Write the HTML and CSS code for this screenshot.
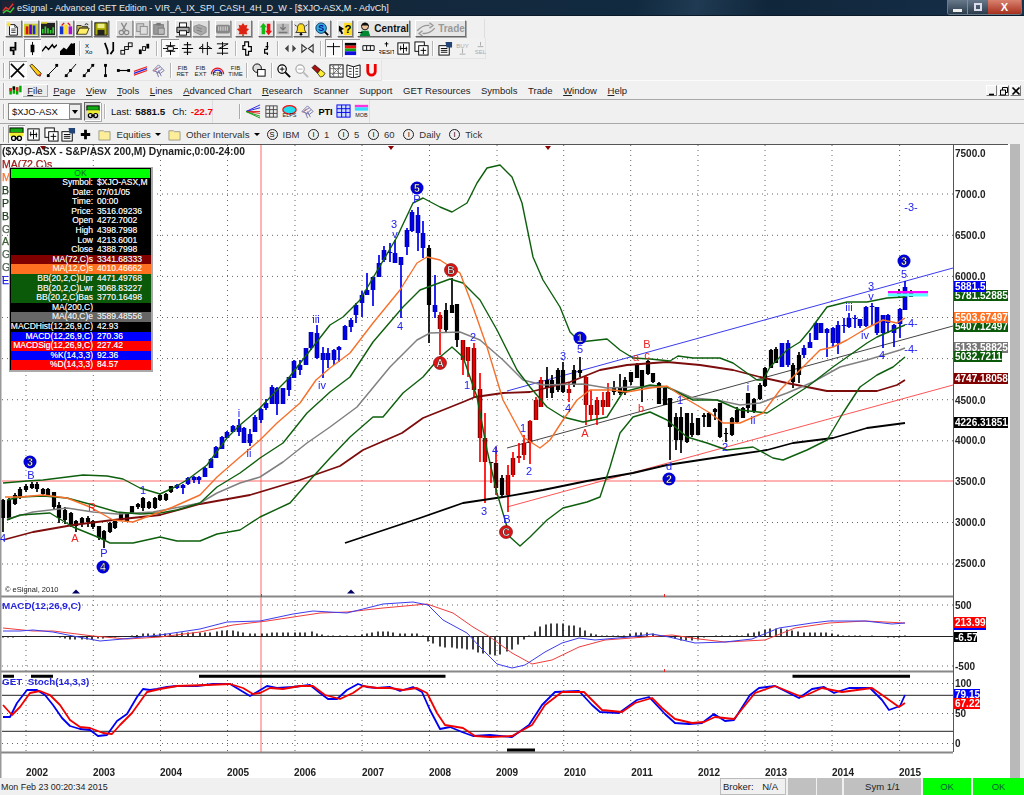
FILE: index.html
```html
<!DOCTYPE html>
<html lang="en">
<head>
<meta charset="utf-8">
<title>eSignal - Advanced GET Edition</title>
<link rel="stylesheet" href="styles.css">
</head>
<body>
<div class="app">

<header class="titlebar">
  <svg class="ticon" viewBox="0 0 14 14"><rect width="14" height="14" fill="#223"/><path d="M1 11 4 7 7 9 12 3" fill="none" stroke="#e33" stroke-width="1.5"/><path d="M1 13 5 10 9 12 13 7" fill="none" stroke="#3c3" stroke-width="1.5"/></svg>
  <span class="ttext">eSignal - Advanced GET Edition - VIR_A_IX_SPI_CASH_4H_D_W - [$XJO-ASX,M - AdvCh]</span>
  <div class="winbtns">
    <span class="wb wb-min"><i></i></span>
    <span class="wb wb-max"><i></i></span>
    <span class="wb wb-close">X</span>
  </div>
</header>

<div class="band band-top">
  <!-- toolbar 1 -->
  <div class="tbar tbar1">
    <div class="b"><svg viewBox="0 0 16 16"><path d="M4 3h6l3 3v9H4z" fill="#fff" stroke="#000"/><path d="M10 3v3h3M6 8h5M6 10h5M6 12h5" fill="none" stroke="#000" stroke-width=".8"/><path d="M3 0l1 2 2 0-1.500 1.500 .5 2-2-1-2 1 .5-2L0 2l2 0z" fill="#fd3"/></svg></div>
    <div class="b"><svg viewBox="0 0 16 16"><rect x="0" y="2" width="16" height="13" fill="#cc3"/><rect x="2" y="5" width="3" height="9" fill="#d11"/><rect x="6" y="3" width="3" height="11" fill="#60c"/><rect x="10" y="4" width="3" height="10" fill="#13c"/></svg></div>
    <div class="b"><svg viewBox="0 0 16 16"><rect x="0" y="1" width="16" height="14" fill="#222"/><path d="M2 13V8M5 13V5M8 13V7M11 13V9M14 13V6" stroke="#3c3" stroke-width="2"/><path d="M0 1h7" stroke="#dc3" stroke-width="2"/></svg></div>
    <div class="b"><svg viewBox="0 0 16 16"><rect x="1" y="5" width="4" height="9" fill="#13c"/><rect x="6" y="3" width="4" height="11" fill="#fd2"/><rect x="11" y="5" width="4" height="9" fill="#a1c"/><path d="M3 4l3-3M13 4l-3-3" stroke="#d11" stroke-width="1.500"/></svg></div>
    <div class="b"><svg viewBox="0 0 16 16"><path d="M1 4h5l1 1h6v2H4L1 14z" fill="#cb5" stroke="#000" stroke-width=".8"/><path d="M4 7h11l-3 7H1z" fill="#fe6" stroke="#000" stroke-width=".8"/><path d="M10 3q2-2 4 0" fill="none" stroke="#000"/></svg></div>
    <div class="b"><svg viewBox="0 0 16 16"><rect x="1" y="1" width="14" height="14" fill="#aa0" stroke="#000"/><rect x="4" y="2" width="8" height="5" fill="#ee8"/><rect x="4" y="9" width="8" height="6" fill="#222"/></svg></div>
    <i class="gap g5"></i>
    <div class="b dis"><svg viewBox="0 0 16 16"><path d="M5 1l5 9M11 1l-5 9" fill="none" stroke="#888" stroke-width="1.500"/><circle cx="5" cy="12" r="2.500" fill="none" stroke="#888" stroke-width="1.300"/><circle cx="11" cy="12" r="2.500" fill="none" stroke="#888" stroke-width="1.300"/></svg></div>
    <div class="b dis"><svg viewBox="0 0 16 16"><rect x="2" y="2" width="8" height="9" fill="#ccc" stroke="#888"/><rect x="6" y="5" width="8" height="9" fill="#ddd" stroke="#888"/></svg></div>
    <div class="b dis"><svg viewBox="0 0 16 16"><rect x="2" y="3" width="11" height="11" fill="#999" stroke="#777"/><rect x="5" y="1" width="5" height="3" fill="#777"/><rect x="7" y="7" width="7" height="7" fill="#bbb" stroke="#777"/></svg></div>
    <i class="gap g5"></i>
    <div class="b"><svg viewBox="0 0 16 16"><rect x="4" y="1" width="8" height="5" fill="#fff" stroke="#000"/><path d="M1 6h14v6H1z" fill="#aaa" stroke="#000"/><rect x="4" y="10" width="8" height="5" fill="#fff" stroke="#000"/></svg></div>
    <div class="b dis"><svg viewBox="0 0 16 16"><path d="M1 5l6-2 8 3v6l-6 3-8-4z" fill="#aaa" stroke="#888"/><path d="M4 6l6 2M4 9l6 2" stroke="#777"/></svg></div>
    <i class="gap g4"></i>
    <div class="b dis"><svg viewBox="0 0 16 16"><rect x="0" y="3" width="16" height="10" rx="2" fill="#888"/><path d="M3 5v5M5 5v5M7 5v5M9 5v5M11 5v5M13 5v5" stroke="#ddd" stroke-width=".9"/></svg></div>
    <i class="gap g2"></i>
    <div class="b"><svg viewBox="0 0 16 16"><path d="M8 1l2 3 3-1-1 4 3 1-3 3 1 3H3l1-3-3-3 3-1-1-4 3 1z" fill="#d21"/><path d="M7 14h2v2H7z" fill="#952"/></svg></div>
    <i class="gap g4"></i>
    <div class="b"><svg viewBox="0 0 16 16"><path d="M5 1l4 5H7v8H3V6H1z" fill="#1b1"/><path d="M11 15l-4-5h2V2h4v8h2z" fill="#e11"/></svg></div>
    <div class="b dis"><svg viewBox="0 0 16 16"><rect x="1" y="2" width="14" height="12" fill="#bbb"/><path d="M8 2v7M5 6l3 3 3-3M3 12h10" fill="none" stroke="#777" stroke-width="1.500"/></svg></div>
    <div class="b"><svg viewBox="0 0 16 16"><path d="M8 2c3 0 4 2 4 5s1 4 2 5H2c1-1 2-2 2-5s1-5 4-5z" fill="#fd2" stroke="#000" stroke-width=".8"/><circle cx="8" cy="14" r="1.500" fill="#000"/><path d="M1 3l2 2M15 3l-2 2" stroke="#000"/></svg></div>
    <i class="gap g3"></i>
    <div class="b"><svg viewBox="0 0 16 16"><circle cx="7" cy="7" r="6" fill="#3ad" stroke="#036"/><path d="M11 11l4 4" stroke="#000" stroke-width="2"/><text x="7" y="10.500" class="svb" text-anchor="middle" fill="#019">S</text></svg></div>
    <i class="gap g4"></i>
    <div class="b"><svg viewBox="0 0 16 16"><path d="M1 4l6 4-3 1 2 4-2 1-2-4-1 2z" fill="#000"/><rect x="7" y="1" width="9" height="14" fill="#fd2"/><text x="11.500" y="12" class="svb svb-l" text-anchor="middle">?</text></svg></div>
    <i class="gap g2"></i>
    <div class="b b-central"><svg viewBox="0 0 16 16"><circle cx="8" cy="5" r="4" fill="#e9c29b" stroke="#000"/><path d="M4 4q4-5 8 0" fill="#111" stroke="#000"/><path d="M2 16l2-6h8l2 6z" fill="#083"/><path d="M0 12h5" stroke="#000"/></svg><span>Central</span></div>
    <i class="gap g3"></i>
    <div class="b b-trade"><svg viewBox="0 0 22 16"><path d="M1 10q6-7 14-6M15 1l4 3-4 3M21 7q-6 7-14 6M7 16l-4-3 4-3" fill="none" stroke="#999" stroke-width="1.500"/></svg><span>Trade</span></div>
  </div>

  <!-- toolbar 2 -->
  <div class="tbar tbar2">
    <i class="grip"></i>
    <div class="f"><svg viewBox="0 0 16 16"><path d="M9 1v6H4v3h3v5M9 7v3" fill="none" stroke="#000" stroke-width="2"/></svg></div>
    <div class="f on"><svg viewBox="0 0 16 16"><rect x="6" y="4" width="4" height="8" fill="#000"/><path d="M8 1v14" stroke="#000"/></svg></div>
    <div class="f"><svg viewBox="0 0 16 16"><path d="M0 11l4-5 3 3 4-5 2 3 3-3" fill="none" stroke="#000" stroke-width="1.500"/></svg></div>
    <div class="f"><svg viewBox="0 0 16 16"><path d="M0 15V11l4-4 3 2 5-7 1 1 3-1v13z" fill="#000"/></svg></div>
    <i class="sep"></i>
    <div class="f"><svg viewBox="0 0 16 16"><text x="1" y="7" class="svs">X</text><text x="1" y="14" class="svs">Xo</text></svg></div>
    <div class="f"><svg viewBox="0 0 16 16"><path d="M3 2l3 8v4M12 1v9l-3 4" fill="none" stroke="#000" stroke-width="1.800"/></svg></div>
    <div class="f"><svg viewBox="0 0 16 16"><rect x="2" y="10" width="4" height="4" fill="none" stroke="#000"/><rect x="6" y="6" width="4" height="3" fill="none" stroke="#000"/><rect x="10" y="2" width="4" height="4" fill="none" stroke="#000"/></svg></div>
    <div class="f"><svg viewBox="0 0 16 16"><rect x="2" y="9" width="3" height="5" fill="#000"/><rect x="6" y="6" width="3" height="4" fill="none" stroke="#000"/><rect x="10" y="3" width="3" height="5" fill="#000"/></svg></div>
    <i class="sep sepw"></i>
    <div class="f on"><svg viewBox="0 0 16 16"><path d="M8 1v14M0 8h16M3 5h10M3 11h10" fill="none" stroke="#000"/><path d="M5 6h6v4H5z" fill="#fff" stroke="#000"/></svg></div>
    <div class="f"><svg viewBox="0 0 16 16"><path d="M8 1v14M4 4h8M2 8h12M4 12h8" stroke="#000" stroke-width="1.200"/></svg></div>
    <div class="f"><svg viewBox="0 0 16 16"><path d="M5 3v10M10 1v14M1 8l4-3M14 8l-4-3M1 8h14" fill="none" stroke="#000"/></svg></div>
    <div class="f"><svg viewBox="0 0 16 16"><path d="M8 1v14M2 3h12L4 8h10M2 13h12" fill="none" stroke="#000"/></svg></div>
    <i class="sep sepw"></i>
    <div class="f"><svg viewBox="0 0 16 16"><path d="M4 1h4v5h3v5H8v4H5v-6H2V5h2z" fill="#fff" stroke="#000" stroke-width="1.300"/></svg></div>
    <div class="f"><svg viewBox="0 0 16 16"><path d="M9 1v8M7 6h3M9 9H6v4h3v2" fill="none" stroke="#000" stroke-width="1.300"/></svg></div>
    <i class="sep"></i>
    <div class="f"><svg viewBox="0 0 16 16"><path d="M6 4v8L2 8zM10 4v8l4-4z" fill="#444"/></svg></div>
    <div class="f"><svg viewBox="0 0 16 16"><path d="M2 4v8l5-4zM14 4v8l-5-4z" fill="none" stroke="#333" stroke-width="1.200"/></svg></div>
    <i class="sep sepw"></i>
    <div class="f on"><svg viewBox="0 0 16 16"><path d="M8 2v13M1 6h14" stroke="#000" fill="none"/></svg></div>
    <div class="f on"><svg viewBox="0 0 16 16"><rect x="2" y="2" width="12" height="3" fill="#000"/><rect x="2" y="5" width="12" height="3" fill="#e11"/><rect x="2" y="8" width="12" height="3" fill="#1a1"/><rect x="2" y="11" width="12" height="4" fill="#11d"/></svg></div>
    <div class="f"><svg viewBox="0 0 16 16"><path d="M2 5h12v5H2zM6 5v5M10 5v5" fill="#fff" stroke="#000"/></svg></div>
    <div class="f"><svg viewBox="0 0 16 16"><path d="M8 1v5M6 3h4" stroke="#000"/><text x="8" y="14" class="svs" text-anchor="middle">RESIT</text></svg></div>
    <div class="f"><svg viewBox="0 0 16 16"><rect x="2" y="2" width="12" height="12" fill="#fff" stroke="#000"/><path d="M8 3v10M5 5v5M11 6v5M4 8h8" stroke="#000"/></svg></div>
    <div class="f"><svg viewBox="0 0 16 16"><rect x="1" y="1" width="10" height="10" fill="#fff" stroke="#000"/><rect x="5" y="5" width="10" height="10" fill="#fff" stroke="#000"/><path d="M10 7v7M7 10h6" stroke="#000"/></svg></div>
    <i class="sep"></i>
    <div class="f"><svg viewBox="0 0 16 16"><rect x="1" y="5" width="11" height="10" fill="#fff" stroke="#000"/><path d="M3 8h7M3 10h7M3 12h7" stroke="#000"/><path d="M8 1h7v6H9z" fill="#247"/></svg></div>
    <div class="f"><svg viewBox="0 0 16 16"><text x="8" y="7" class="svs" text-anchor="middle" fill="#aaa">BUY</text><path d="M8 8v5M5 14h6" stroke="#aaa"/></svg></div>
    <div class="f"><svg viewBox="0 0 16 16"><path d="M8 1v4M5 6h6" stroke="#aaa"/><text x="8" y="14" class="svs" text-anchor="middle" fill="#aaa">SEL</text></svg></div>
  </div>

  <!-- toolbar 3 -->
  <div class="tbar tbar3">
    <i class="grip"></i>
    <div class="f on"><svg viewBox="0 0 16 16"><path d="M1 1l14 14M15 1L1 15" stroke="#000" stroke-width="1.700"/></svg></div>
    <div class="f"><svg viewBox="0 0 16 16"><path d="M2 3l2-2 10 10-1 3-3-1z" fill="#fc1" stroke="#000" stroke-width=".8"/><path d="M10 13l3 1 1-3z" fill="#c33"/></svg></div>
    <div class="f"><svg viewBox="0 0 16 16"><path d="M3 13L13 3" stroke="#000"/><rect x="2" y="12" width="3" height="3" fill="#000"/><rect x="11" y="1" width="3" height="3" fill="#000"/></svg></div>
    <div class="f"><svg viewBox="0 0 16 16"><path d="M2 15L14 1" stroke="#000"/><rect x="6.500" y="6.500" width="3" height="3" fill="#000"/><rect x="2" y="12" width="3" height="3" fill="#000"/></svg></div>
    <div class="f"><svg viewBox="0 0 16 16"><path d="M2 15L14 1" stroke="#000"/><rect x="2" y="12" width="3" height="3" fill="#000"/><rect x="6.500" y="6.500" width="3" height="3" fill="#000"/><rect x="11" y="1" width="3" height="3" fill="#000"/></svg></div>
    <div class="f"><svg viewBox="0 0 16 16"><path d="M8 2v12" stroke="#000" stroke-width="1.200"/><rect x="6.500" y="1" width="3" height="3" fill="#000"/><rect x="6.500" y="12" width="3" height="3" fill="#000"/></svg></div>
    <div class="f"><svg viewBox="0 0 16 16"><path d="M2 8h12" stroke="#000" stroke-width="1.200"/><rect x="1" y="6.500" width="3" height="3" fill="#000"/><rect x="12" y="6.500" width="3" height="3" fill="#000"/></svg></div>
    <div class="f"><svg viewBox="0 0 16 16"><path d="M1 9l14-5" stroke="#e22" stroke-width="1.300"/><path d="M1 11l14-5" stroke="#22d" stroke-width="1.300"/><path d="M1 13l14-5" stroke="#e22" stroke-width="1.300"/></svg></div>
    <div class="f"><svg viewBox="0 0 16 16"><path d="M2 8l6-6 6 6-4 3zM4 8l6-4M6 11l6-5M8 15l-2-6M11 14l-3-6" fill="none" stroke="#77a"/><path d="M3 9l4-4" stroke="#c66"/></svg></div>
    <i class="sep"></i>
    <div class="f"><svg viewBox="0 0 16 16"><text x="8" y="7" class="svf" text-anchor="middle">FIB</text><text x="8" y="14" class="svf" text-anchor="middle">RET</text></svg></div>
    <div class="f"><svg viewBox="0 0 16 16"><text x="8" y="7" class="svf" text-anchor="middle">FIB</text><text x="8" y="14" class="svf" text-anchor="middle">EXT</text></svg></div>
    <div class="f"><svg viewBox="0 0 16 16"><path d="M1.500 12A6.500 6.500 0 0 1 14.500 12" fill="none" stroke="#e11" stroke-width="1.300"/><path d="M3.500 12A4.500 4.500 0 0 1 12.500 12" fill="none" stroke="#22d" stroke-width="1.300"/><text x="8" y="14" class="svf" text-anchor="middle">FIB</text></svg></div>
    <div class="f"><svg viewBox="0 0 16 16"><text x="8" y="7" class="svf" text-anchor="middle">FIB</text><text x="8" y="14" class="svf" text-anchor="middle">TIME</text></svg></div>
    <i class="sep"></i>
    <div class="f"><svg viewBox="0 0 16 16"><circle cx="5.500" cy="5.500" r="4.500" fill="#ddd" stroke="#000"/><rect x="6" y="7" width="8" height="7" fill="#fff" stroke="#000"/></svg></div>
    <i class="sep"></i>
    <div class="f"><svg viewBox="0 0 16 16"><circle cx="6.500" cy="6.500" r="4.500" fill="#fff" stroke="#000" stroke-width="1.300"/><path d="M10 10l5 5" stroke="#000" stroke-width="2"/><path d="M4 6.500h5M6.500 4v5" stroke="#000"/></svg></div>
    <div class="f"><svg viewBox="0 0 16 16"><circle cx="6.500" cy="6.500" r="4.500" fill="#fff" stroke="#aaa" stroke-width="1.300"/><path d="M10 10l5 5" stroke="#bbb" stroke-width="2"/><path d="M4 6.500h5" stroke="#aaa"/></svg></div>
    <div class="f"><svg viewBox="0 0 16 16"><path d="M1 5l3-3 6 5-3 4z" fill="#a11" stroke="#000" stroke-width=".7"/><path d="M7 11l3-4 5 4-2 3-3 1z" fill="#fe3" stroke="#000" stroke-width=".7"/></svg></div>
    <div class="f"><svg viewBox="0 0 16 16"><rect x="1" y="2" width="14" height="13" fill="#fff" stroke="#000"/><path d="M1 6h14M1 11h14M5 2v13M10 2v13M3 3l10 10M13 3L3 13" stroke="#555" stroke-width=".8"/></svg></div>
    <div class="f"><svg viewBox="0 0 16 16"><path d="M1 2l7 2 7-2v12l-7 2-7-2z" fill="#fff" stroke="#000"/><path d="M8 4v12M3 6h3M3 9h3M3 12h3M10 6h3M10 9h3M10 12h3" stroke="#000" stroke-width=".8"/></svg></div>
    <div class="f"><svg viewBox="0 0 16 16"><path d="M4 1v8a4 4 0 0 0 8 0V1" fill="none" stroke="#e00" stroke-width="3"/></svg></div>
  </div>
</div>

<nav class="menubar">
  <i class="grip"></i>
  <svg class="mlogo" viewBox="0 0 16 14"><path d="M2 4v8M6 2v9M10 3v9M14 1v8" stroke-width="3" stroke="#0a0"/><path d="M2 4v4M10 3v5" stroke-width="3" stroke="#d22"/><path d="M6 2v4" stroke-width="3" stroke="#000"/></svg>
  <ul class="menu">
    <li class="hot"><u>F</u>ile</li>
    <li><u>P</u>age</li>
    <li><u>V</u>iew</li>
    <li><u>T</u>ools</li>
    <li><u>L</u>ines</li>
    <li><u>A</u>dvanced Chart</li>
    <li><u>R</u>esearch</li>
    <li>Scanner</li>
    <li>Support</li>
    <li>GET Resources</li>
    <li>Symbols</li>
    <li>Trade</li>
    <li><u>W</u>indow</li>
    <li><u>H</u>elp</li>
  </ul>
  <div class="mdi">
    <span class="mb"><svg viewBox="0 0 10 10"><path d="M2 8.500h5" stroke="#000" stroke-width="1.600"/></svg></span>
    <span class="mb"><svg viewBox="0 0 10 10"><path d="M1.500 4h5v5h-5zM3.500 4V1.500h5v5H7" fill="none" stroke="#000"/></svg></span>
    <span class="mb"><svg viewBox="0 0 10 10"><path d="M1.500 1.500l7 7M8.500 1.500l-7 7" stroke="#000" stroke-width="1.600"/></svg></span>
  </div>
</nav>

<div class="band symrow">
  <div class="tbar tsym">
    <i class="grip"></i>
    <div class="combo"><span>$XJO-ASX</span><b class="arrow"></b></div>
    <div class="b link"><svg viewBox="0 0 16 16"><rect x="1" y="1" width="14" height="5" fill="#1a1" stroke="#000"/><rect x="1" y="6" width="14" height="4" fill="#ee3"/><circle cx="5" cy="12" r="2.300" fill="none" stroke="#000" stroke-width="1.400"/><circle cx="11" cy="12" r="2.300" fill="none" stroke="#000" stroke-width="1.400"/><path d="M6 12h4" stroke="#000" stroke-width="1.400"/></svg></div>
    <i class="sep sepsym"></i>
    <span class="q">Last: <b>5881.5</b></span>
    <span class="q qch">Ch: <b class="neg">-22.7</b></span>
  </div>
  <div class="tbar tsym2">
    <i class="grip"></i>
    <div class="f"><svg viewBox="0 0 16 16"><path d="M0 8L15 1M0 8L15 4" stroke="#22d"/><path d="M0 8L15 8M0 8l15 2" stroke="#d22"/><path d="M0 8l15 5M0 8l15 7" stroke="#191"/></svg></div>
    <div class="f"><svg viewBox="0 0 16 16"><rect x="2" y="2" width="12" height="12" fill="#eee" stroke="#444"/><path d="M2 6h12M2 10h12M6 2v12M10 2v12" stroke="#444"/></svg></div>
    <div class="f"><svg viewBox="0 0 18 16"><ellipse cx="9" cy="6" rx="8" ry="5" fill="#2de" stroke="#e11" stroke-width="1.500"/><text x="9" y="15" class="svf" text-anchor="middle">ELPS</text></svg></div>
    <div class="f"><svg viewBox="0 0 16 16"><path d="M2 8l6-6 6 6-4 3zM4 8l6-4M6 11l6-5M8 15l-2-6M11 14l-3-6" fill="none" stroke="#77a"/><path d="M3 9l4-4" stroke="#c66"/></svg></div>
    <div class="f"><svg viewBox="0 0 18 16"><text x="9" y="12" class="svp" text-anchor="middle">PTI</text></svg></div>
    <div class="f"><svg viewBox="0 0 16 16"><rect x="1" y="1" width="14" height="13" fill="#cdf" stroke="#00e"/><path d="M1 5h14M1 9h14M6 1v13M10.500 1v13" stroke="#00e"/></svg></div>
    <div class="f"><svg viewBox="0 0 18 16"><rect x="1" y="0" width="16" height="3" fill="#f3d"/><rect x="1" y="3" width="16" height="4" fill="#3df"/><text x="9" y="14.500" class="svf" text-anchor="middle">MOB</text></svg></div>
  </div>
</div>

<div class="band linkrow">
  <div class="tbar tlink">
    <i class="grip"></i>
    <div class="f on"><svg viewBox="0 0 16 16"><rect x="1" y="1" width="14" height="5" fill="#1a1" stroke="#000"/><rect x="1" y="6" width="14" height="4" fill="#ee3"/><circle cx="5" cy="12" r="2.300" fill="none" stroke="#000" stroke-width="1.400"/><circle cx="11" cy="12" r="2.300" fill="none" stroke="#000" stroke-width="1.400"/><path d="M6 12h4" stroke="#000" stroke-width="1.400"/></svg></div>
    <div class="f"><svg viewBox="0 0 16 16"><rect x="2" y="2" width="12" height="12" fill="#fff" stroke="#000"/><path d="M8 3v10M5 5v5M11 6v5M4 8h8" stroke="#000"/></svg></div>
    <div class="f"><svg viewBox="0 0 16 16"><rect x="1" y="1" width="10" height="10" fill="#fff" stroke="#000"/><rect x="5" y="5" width="10" height="10" fill="#fff" stroke="#000"/><path d="M10 7v7M7 10h6" stroke="#000"/></svg></div>
    <div class="f"><svg viewBox="0 0 16 16"><rect x="1" y="5" width="11" height="10" fill="#fff" stroke="#000"/><path d="M3 8h7M3 10h7M3 12h7" stroke="#000"/><path d="M8 1h7v6H9z" fill="#247"/></svg></div>
    <div class="f"><svg viewBox="0 0 16 16"><path d="M8 3v10M3 8h10" stroke="#000" stroke-width="3"/></svg></div>
    <div class="fav"><svg viewBox="0 0 14 14"><path d="M1 3h5l1 1h6v9H1z" fill="#fe9" stroke="#998"/></svg><span class="fname">Equities</span><b class="caret"></b></div>
    <div class="fav"><svg viewBox="0 0 14 14"><path d="M1 3h5l1 1h6v9H1z" fill="#fe9" stroke="#998"/></svg><span class="fname">Other Intervals</span><b class="caret"></b></div>
    <div class="iv"><i>S</i><span>IBM</span></div>
    <div class="iv"><i>I</i><span>1</span></div>
    <div class="iv"><i>I</i><span>5</span></div>
    <div class="iv"><i>I</i><span>60</span></div>
    <div class="iv"><i>I</i><span>Daily</span></div>
    <div class="iv"><i>I</i><span>Tick</span></div>
  </div>
</div>

<main class="work">
  <div class="chart">
    <svg class="plot" viewBox="0 144 1010 634" width="1010" height="634">
      <rect x="0" y="144" width="1010" height="634" fill="#fff"/>

      <!-- grid -->
      <path class="grid" d="M26 145V752M93.300 145V752M160.500 145V752M227.500 145V752M295 145V752M362 145V752M429.500 145V752M497 145V752M563.700 145V752M630.700 145V752M698 145V752M765 145V752M832 145V752M899.600 145V752"/>
      <path class="grid" d="M2 194H953M2 235.300H953M2 276.400H953M2 317.500H953M2 358.600H953M2 399.700H953M2 440.800H953M2 522.500H953M2 564H953M2 605H953M2 666H953M2 683.500H953M2 713.500H953M2 743.500H953"/>
      <path class="hred" d="M2 481H953"/>
      <path class="hred" d="M261 145V752"/>

      <!-- trend lines -->
      <path class="tl tl-blue" d="M507 391L953 268"/>
      <path class="tl tl-gray" d="M507 448L953 326"/>
      <path class="tl tl-red" d="M507 507L953 385"/>

      <!-- candle wicks -->
      <path class="w w-k" d="M3 499V532M9 498V520M15 493V505M20 487V499M26 484V492M32 482V489M37 482V492M43 488V495M48 488V497M54 492V509M59 502V523M65 507V524M71 512V527M76 520V532M82 517V527M88 516V527M93 520V529M99 526V540M104 530V548M110 522V533M115 520V529M121 513V521M127 513V522M132 506V513M138 503V509M143 497V511M149 501V509M155 497V509M160 494V501M166 493V501M171 486V493M429 245V343M446 303V333M452 278V313M457 304V347M502 475V498M547 367V398M552 375V398M558 368V392M563 362V393M574 365V387M580 357V377M614 381V395M620 374V395M625 377V395M631 372V385M637 363V378M642 370V402M648 360V375M653 373V383M659 382V404M665 387V405M670 398V460M676 413V450M681 407V453M687 413V443M692 413V437M698 418V435M704 413V427M709 412V427M715 408V420M720 403V438M726 428V442M732 417V436M737 407V423M743 407V418M748 393V413M754 398V413M760 383V400M765 367V387M771 349V368M776 347V363M793 363V388M799 352V383M899 289V297M911 290V297"/>
      <path class="w w-b" d="M177 484V489M183 484V494M188 477V485M194 476V483M199 476V484M205 467V477M211 458V468M216 446V458M222 436V449M227 431V438M233 425V432M239 419V436M244 427V443M250 429V446M255 415V432M261 408V423M266 399V410M272 385V404M277 387V415M283 388V404M289 377V396M294 360V378M300 360V375M306 348V365M311 332V350M317 325V359M323 347V378M328 348V368M334 349V365M339 346V362M345 325V340M351 318V332M356 303V323M362 291V317M367 273V295M373 277V306M379 255V277M384 246V262M390 243V262M395 240V263M401 257V318M407 228V255M412 210V232M418 207V251M423 221V258M435 275V318M782 343V367M788 340V367M804 345V358M810 333V348M816 322V340M821 323V333M827 328V357M833 327V347M838 321V354M844 318V333M849 313V328M855 315V328M860 320V328M866 306V327M872 303V325M877 307V335M883 315V348M888 314V333M894 324V347M900 308V338M905 281V310"/>
      <path class="w w-r" d="M440 312V355M463 340V375M468 347V377M474 343V397M480 373V462M485 413V503M491 462V483M496 447V495M508 465V512M513 452V477M519 443V463M524 435V460M530 420V464M536 397V420M541 377V407M569 382V402M586 375V425M591 390V420M597 397V425M603 392V415M608 383V407"/>

      <!-- candle bodies -->
      <path class="c c-k" d="M3 500V518M9 500V518M15 495V504M20 489V497M26 486V490M32 484V488M37 484V489M43 489V494M48 489V495M54 492V507M59 505V518M65 510V520M71 513V525M76 521V526M82 518V523M88 518V522M93 521V527M99 526V538M104 531V540M110 523V532M115 521V528M121 513V520M127 513V521M132 506V513M138 504V507M143 498V508M149 502V508M155 498V508M160 495V500M166 494V500M171 486V492M429 248V305M446 310V330M452 305V313M457 304V340M502 478V495M547 380V388M552 380V393M558 370V390M563 370V392M574 370V385M580 370V373M614 387V392M620 387V393M625 380V393M631 372V382M637 365V378M642 370V387M648 361V374M653 373V382M659 383V404M665 388V405M670 398V427M676 417V440M681 417V440M687 413V442M692 423V435M698 418V435M704 415V417M709 413V427M715 409V412M720 403V437M726 433V434M732 418V435M737 410V422M743 408V418M748 393V408M754 399V412M760 385V399M765 368V386M771 350V368M776 349V363M793 365V382M799 355V375M899 292V296M911 292V297"/>
      <path class="c c-bo" d="M177 485V488M183 485V488M188 478V484M194 477V480M199 477V480M205 468V477M211 459V468M216 447V458M222 437V449M227 432V438M233 426V432M239 425V432M244 428V443M250 434V443M255 417V432M261 409V420M266 403V408M272 387V404M277 388V404M283 388V404M289 377V390M294 361V378M300 365V370M306 348V365M311 332V348M317 333V358M323 353V360M328 353V360M334 350V360M339 347V350M345 326V340M351 320V327M356 305V315M362 295V303M367 290V295M373 277V290M379 263V277M384 250V260M390 252V253M395 253V263M401 257V265M407 230V247M412 212V231M418 215V233M423 233V248M435 305V312M782 343V367M788 343V365M804 348V355M810 342V348M816 323V340M821 323V333M827 329V333M833 328V343M838 325V343M844 325V326M849 318V327M855 318V319M860 319V326M866 307V326M872 306V307M877 307V333M883 315V333M888 315V323M894 325V333M900 309V324M905 287V310"/>
      <path class="c c-b" d="M177 485V488M183 485V488M188 478V484M194 477V480M199 477V480M205 468V477M211 459V468M216 447V458M222 437V449M227 432V438M233 426V432M239 425V432M244 428V443M250 434V443M255 417V432M261 409V420M266 403V408M272 387V404M277 388V404M283 388V404M289 377V390M294 361V378M300 365V370M306 348V365M311 332V348M317 333V358M323 353V360M328 353V360M334 350V360M339 347V350M345 326V340M351 320V327M356 305V315M362 295V303M367 290V295M373 277V290M379 263V277M384 250V260M390 252V253M395 253V263M401 257V265M407 230V247M412 212V231M418 215V233M423 233V248M435 305V312M782 343V367M788 343V365M804 348V355M810 342V348M816 323V340M821 323V333M827 329V333M833 328V343M838 325V343M844 325V326M849 318V327M855 318V319M860 319V326M866 307V326M872 306V307M877 307V333M883 315V333M888 315V323M894 325V333M900 309V324M905 287V310"/>
      <path class="c c-ro" d="M440 315V329M463 340V360M468 347V361M474 348V390M480 389V438M485 438V462M491 462V463M496 463V488M508 475V495M513 458V475M519 456V458M524 443V455M530 421V443M536 400V420M541 380V407M569 389V393M586 377V405M591 405V415M597 400V415M603 400V407M608 392V407"/>
      <path class="c c-r" d="M440 315V329M463 340V360M468 347V361M474 348V390M480 389V438M485 438V462M508 475V495M513 458V475M519 456V458M524 443V455M530 421V443M536 400V420M541 380V407M569 389V393M586 377V405M591 405V415M597 400V415M603 400V407M608 392V407"/>

      <!-- magenta / cyan band -->
      <rect class="bandm" x="888" y="291" width="40" height="2.500"/>
      <rect class="bandc" x="888" y="293.500" width="40" height="3"/>

      <!-- MA72 -->
      <polyline class="ln ma72" points="3,540 33,532 73,525 113,520 160,515 200,504 250,495 300,480 340,466 363,450 402,433 423,418 463,402 475,397 503,393 530,392 570,382 600,370 627,365 667,362 700,365 733,370 760,377 787,383 827,391 877,391 897,385 905,380"/>
      <!-- MA200 -->
      <polyline class="ln ma200" points="345,543 420,518 463,503 503,497 543,490 587,481 633,473 667,465 700,460 733,455 767,450 793,443 833,438 867,428 905,423"/>
      <!-- MA40 -->
      <polyline class="ln ma40" points="7,519 33,512 67,508 93,512 117,514 153,512 180,507 200,503 217,493 240,483 260,477 283,462 307,443 330,427 357,407 390,367 417,340 430,333 460,332 480,340 503,360 523,380 543,385 583,384 607,388 633,387 667,387 693,398 717,400 740,405 760,403 787,393 813,382 840,367 867,360 900,350 905,348"/>
      <!-- BB -->
      <polyline class="ln bb" points="3,483 27,481 43,480 67,477 83,475 107,476 123,479 140,488 160,494 173,488 187,480 207,465 227,438 240,425 260,408 277,390 287,380 330,325 343,317 360,300 397,237 413,203 423,198 440,207 452,212 467,203 477,183 487,168 500,165 512,177 522,203 533,257 543,280 560,307 570,332 580,342 607,339 620,350 633,358 650,359 670,361 678,356 693,358 720,358 733,363 747,373 757,380 763,380 770,367 787,350 800,342 810,330 827,307 847,302 867,302 887,298 905,297"/>
      <polyline class="ln bb" points="7,500 20,497 43,496 67,498 93,505 117,512 140,514 160,513 177,510 200,503 217,487 240,473 260,458 283,443 307,413 330,392 350,377 373,342 403,307 420,290 450,279 463,283 480,300 497,330 517,370 530,387 547,407 563,417 583,422 607,417 623,392 650,385 667,387 693,400 717,400 740,410 767,413 787,400 807,387 833,367 867,343 877,337 893,330 905,325"/>
      <polyline class="ln bb" points="7,520 20,515 50,513 73,527 100,538 110,543 133,543 160,537 177,541 200,541 217,534 240,530 260,517 290,503 310,480 330,458 350,437 373,417 383,417 403,393 423,377 440,357 452,347 463,357 477,397 487,450 497,493 510,537 520,546 530,537 547,520 563,508 587,502 600,497 610,467 620,433 633,417 650,412 667,420 687,437 707,443 727,450 753,447 773,458 783,460 807,450 827,440 843,413 860,387 877,375 893,367 905,357"/>
      <!-- MA12 -->
      <polyline class="ln ma12" points="5,497 20,497 43,495 67,498 90,507 113,520 133,522 157,513 173,507 200,495 217,477 240,457 260,440 277,423 300,403 316,380 330,368 350,353 373,323 400,290 417,263 427,257 440,260 460,273 473,307 487,347 503,400 523,437 540,448 550,440 563,420 577,400 590,390 613,390 627,392 650,388 667,386 683,397 700,407 710,413 723,423 740,423 763,413 780,390 800,370 820,350 833,347 847,340 867,328 883,320 897,323 905,318"/>

      <!-- pane borders -->
      <path class="pane" d="M0 144.500H1008"/>
      <path class="pane2" d="M0 596.500H953M0 671.500H953M0 752.500H953"/>
      <path class="axisline" d="M953.500 145V752"/>
      <path class="edge" d="M.5 145V778"/>

      <!-- markers -->
      <path fill="#800" d="M40 146h6l-3 4zM388 146h6l-3 4zM545 146h6l-3 4z"/>
      <path fill="#006" d="M72 593.500h8l-4-4zM347 593.500h8l-4-4z"/>
      <path fill="#e22" d="M261 594h1v3h-1zM664 594h1v3h-1zM664 669h1v3h-1z"/>

      <!-- elliott labels -->
      <g class="wv wv-b">
        <text x="31" y="479">B</text><text x="104" y="557">P</text><text x="3" y="542">4</text><text x="143" y="494">1</text><text x="239" y="417">i</text><text x="249" y="457">ii</text><text x="316" y="323">iii</text><text x="322" y="389">iv</text><text x="394" y="228">3</text><text x="395" y="238">v</text><text x="400" y="330">4</text><text x="417" y="203">P</text><text x="473" y="341">2</text><text x="467" y="389">1</text><text x="523" y="432">1</text><text x="529" y="475">2</text><text x="484" y="515">3</text><text x="495" y="454">4</text><text x="507" y="523">B</text><text x="563" y="360">3</text><text x="580" y="353">5</text><text x="568" y="412">4</text><text x="680" y="404">1</text><text x="669" y="470">d</text><text x="725" y="451">2</text><text x="748" y="391">i</text><text x="753" y="424">ii</text><text x="849" y="311">iii</text><text x="871" y="290">3</text><text x="871" y="300">v</text><text x="865" y="339">iv</text><text x="882" y="359">4</text><text x="904" y="278">5</text><text x="911" y="327">-4-</text><text x="911" y="353">-4-</text><text x="911" y="211">-3-</text>
      </g>
      <g class="wv wv-r">
        <text x="75" y="542">A</text><text x="92" y="511">R</text><text x="585" y="437">A</text><text x="647" y="348">B</text><text x="647" y="359">c</text><text x="636" y="361">a</text><text x="641" y="412">b</text>
      </g>
      <g class="dot dot-b">
        <circle cx="30" cy="462" r="6.500"/><circle cx="103" cy="567" r="6.500"/><circle cx="417" cy="188" r="6.500"/><circle cx="580" cy="338" r="6.500"/><circle cx="669" cy="479" r="6.500"/><circle cx="904" cy="261" r="6.500"/>
        <text x="30" y="466">3</text><text x="103" y="571">4</text><text x="417" y="192">5</text><text x="580" y="342">1</text><text x="669" y="483">2</text><text x="904" y="265">3</text>
      </g>
      <g class="dot dot-r">
        <circle cx="451" cy="270" r="6.500"/><circle cx="440" cy="363" r="6.500"/><circle cx="506" cy="532" r="6.500"/>
        <text x="451" y="274">B</text><text x="440" y="367">A</text><text x="506" y="536">C</text>
      </g>
      <text class="wm" x="5" y="592">© eSignal, 2010</text>

      <!-- MACD histogram -->
      <path class="hist" d="M3 636.500v1M8 636.500v1M13 636.500v1M60 636.500v1M65 636.500v2M70 636.500v3M75 636.500v3M82 636.500v3M87 636.500v3M92 636.500v3M98 636.500v2M103 636.500v2M110 636.500v1M115 636.500v1M132 636.500v-1M137 636.500v-1.500M143 636.500v-3M148 636.500v-3M154 636.500v-3M160 636.500v-3M165 636.500v-3M170 636.500v-3M177 636.500v-3M182 636.500v-4M188 636.500v-4M193 636.500v-4M200 636.500v-4M205 636.500v-4M210 636.500v-4M217 636.500v-5M222 636.500v-6M227 636.500v-6M233 636.500v-6M238 636.500v-5M243 636.500v-4M250 636.500v-3M255 636.500v-3M262 636.500v-3M267 636.500v-3M272 636.500v-4M277 636.500v-4M283 636.500v-4M288 636.500v-4M295 636.500v-4M300 636.500v-4M305 636.500v-4M312 636.500v-5M317 636.500v-3M322 636.500v-2M328 636.500v-1M333 636.500v-1M340 636.500v-1M347 636.500v-1M355 636.500v-1M362 636.500v-2M367 636.500v-3M372 636.500v-4M378 636.500v-5M383 636.500v-5M388 636.500v-5M393 636.500v-4M400 636.500v-3M405 636.500v-3M412 636.500v-3M417 636.500v-3M423 636.500v-1M428 636.500v5M433 636.500v7M440 636.500v10M445 636.500v11M452 636.500v11M457 636.500v12M462 636.500v12M467 636.500v13M473 636.500v13M478 636.500v16M483 636.500v17M490 636.500v18M495 636.500v19M500 636.500v18M507 636.500v15M512 636.500v13M518 636.500v8M524 636.500v3M529 636.500v-1M535 636.500v-5M540 636.500v-10M546 636.500v-12M551 636.500v-13M557 636.500v-13M563 636.500v-13M569 636.500v-11M574 636.500v-11M580 636.500v-9M585 636.500v-6M591 636.500v-3M596 636.500v-2M602 636.500v-1M607 636.500v-1M613 636.500v-1M618 636.500v-1M624 636.500v-1M630 636.500v-3M636 636.500v-4M641 636.500v-4M647 636.500v-4M653 636.500v-3M659 636.500v-1M675 636.500v2M681 636.500v4M686 636.500v4M692 636.500v4M698 636.500v3M704 636.500v1M716 636.500v-1M722 636.500v-1M730 636.500v-1M737 636.500v-1M742 636.500v-1M748 636.500v-3M754 636.500v-4M759 636.500v-5M765 636.500v-7M770 636.500v-8M776 636.500v-8M781 636.500v-8M787 636.500v-7M792 636.500v-6M798 636.500v-5M804 636.500v-4M810 636.500v-4M815 636.500v-4M821 636.500v-4M826 636.500v-4M832 636.500v-3M838 636.500v-2M843 636.500v-1M849 636.500v-1M855 636.500v-1M860 636.500v-1M872 636.500v-1M888 636.500v1M894 636.500v1M899 636.500v1M905 636.500v-1"/>
      <path class="zero" d="M2 636.500H953"/>
      <polyline class="ml ml-r" points="3,628 33,631 53,631 93,636 127,639 160,637 200,632 233,625 267,621 300,616 320,613 347,612 383,608 427,604 453,613 473,627 490,637 512,653 532,664 552,660 579,647 605,640 645,637 672,635 699,639 725,642 765,640 795,628 829,623 865,621 905,623"/>
      <polyline class="ml ml-b" points="3,631 20,631 33,630 53,632 73,636 100,641 123,639 160,635 200,629 227,622 260,621 293,614 313,611 347,613 383,604 413,602 428,605 443,620 467,633 480,647 497,664 512,668 525,665 545,652 562,643 579,638 595,640 629,637 652,634 669,637 695,643 725,642 752,639 779,628 812,623 829,621 865,621 892,624 905,623"/>

      <!-- Stochastic -->
      <path class="zero" d="M2 695.300H953M2 731.300H953"/>
      <path class="sbar" d="M199 676.300H445.500M792.500 676.300H910M3 676.300H14M31 676.300H53M507 750H535"/>
      <polyline class="sl sl-b" points="3,717 10,717 17,703 27,690 37,690 45,695 53,705 62,718 70,726 80,729 90,730 98,736 107,735 117,721 127,714 137,697 143,689 150,690 157,689 167,687 177,686 197,686 213,684 230,684 240,690 250,696 257,692 267,686 277,688 293,687 310,685 320,693 328,699 337,699 347,690 358,684 367,687 377,688 390,687 400,691 413,687 422,692 430,710 440,729 450,727 462,732 473,736 490,735 500,736 512,737 529,725 542,705 555,692 579,691 592,705 600,712 619,713 637,700 649,697 665,714 675,723 689,724 702,723 714,714 725,721 734,720 750,695 759,688 775,686 789,693 799,698 812,689 824,687 834,693 849,688 870,688 882,700 889,710 900,706 905,695"/>
      <polyline class="sl sl-r" points="3,705 12,715 20,707 30,693 40,691 50,695 60,705 70,720 80,727 90,728 103,733 112,734 120,725 132,713 147,692 160,689 177,686 207,685 230,684 243,688 253,694 260,693 270,688 283,689 300,686 313,686 325,695 340,699 353,693 363,686 377,688 390,688 403,690 417,688 427,693 437,713 445,725 463,728 475,736 490,737 512,736 532,725 545,705 562,692 584,692 602,710 622,712 635,703 652,698 662,708 675,719 692,723 704,722 715,717 734,719 755,693 775,686 802,697 822,688 842,692 872,688 885,697 899,707 905,703"/>

      <!-- pane titles -->
      <text class="ptitle" x="2" y="155" textLength="243" lengthAdjust="spacingAndGlyphs">($XJO-ASX - S&amp;P/ASX 200,M) Dynamic,0:00-24:00</text>
      <text class="lgd lgd-ma72" x="2" y="168">MA(72,C)s</text>
      <text class="lgd lgd-ma12" x="2" y="181">M</text>
      <text class="lgd lgd-bb" x="2" y="194">B</text>
      <text class="lgd lgd-bb" x="2" y="207">P</text>
      <text class="lgd lgd-bb" x="2" y="220">B</text>
      <text class="lgd lgd-gr" x="2" y="233">G</text>
      <text class="lgd lgd-ol" x="2" y="245">A</text>
      <text class="lgd lgd-gr" x="2" y="258">G</text>
      <text class="lgd lgd-gr" x="2" y="271">G</text>
      <text class="lgd lgd-bl" x="2" y="284">E</text>
      <text class="ptitle ptitle-b" x="2" y="609">MACD(12,26,9,C)</text>
      <text class="ptitle ptitle-b" x="2" y="685" xml:space="preserve">GET  Stoch(14,3,3)</text>

      <!-- price axis -->
      <g class="ax">
        <text x="955" y="157">7500.0</text><text x="955" y="198">7000.0</text><text x="955" y="239">6500.0</text><text x="955" y="280">6000.0</text><text x="955" y="404">4500.0</text><text x="955" y="444">4000.0</text><text x="955" y="485">3500.0</text><text x="955" y="526">3000.0</text><text x="955" y="567">2500.0</text>
        <text x="955" y="609">500</text><text x="955" y="670">-500</text><text x="955" y="687">100</text><text x="955" y="717">50</text><text x="955" y="747">0</text>
      </g>
      <g class="tag">
        <rect x="954" y="290" width="54" height="11" fill="#0a5a0a"/><text x="955" y="299">5781.52885</text>
        <rect x="954" y="281" width="32" height="11" fill="#0000f0"/><text x="955" y="290">5881.5</text>
        <rect x="954" y="321" width="54" height="11" fill="#0a5a0a"/><text x="955" y="330">5407.12497</text>
        <rect x="954" y="312" width="54" height="11" fill="#ff7020"/><text x="955" y="321">5503.67497</text>
        <rect x="954" y="342" width="54" height="11" fill="#777"/><text x="955" y="351">5133.58825</text>
        <rect x="954" y="351" width="48" height="11" fill="#0a5a0a"/><text x="955" y="360">5032.7211</text>
        <rect x="954" y="373" width="54" height="11" fill="#800000"/><text x="955" y="382">4747.18058</text>
        <rect x="954" y="417" width="54" height="11" fill="#000"/><text x="955" y="426">4226.31851</text>
        <rect x="954" y="618" width="32" height="12" fill="#00f"/><rect x="954" y="617" width="32" height="11" fill="#f00"/><text x="955" y="626">213.99</text>
        <rect x="954" y="632" width="23" height="10" fill="#000"/><text x="955" y="640.500">-6.57</text>
        <rect x="954" y="689" width="26" height="11" fill="#00f"/><text x="955" y="698">79.15</text>
        <rect x="954" y="698" width="26" height="11" fill="#f00"/><text x="955" y="707">67.22</text>
      </g>

      <!-- time axis -->
      <g class="yr">
        <text x="37" y="776">2002</text><text x="104" y="776">2003</text><text x="171" y="776">2004</text><text x="238" y="776">2005</text><text x="305" y="776">2006</text><text x="373" y="776">2007</text><text x="440" y="776">2008</text><text x="507" y="776">2009</text><text x="575" y="776">2010</text><text x="642" y="776">2011</text><text x="709" y="776">2012</text><text x="776" y="776">2013</text><text x="843" y="776">2014</text><text x="910" y="776">2015</text>
      </g>
    </svg>

    <!-- data window tooltip -->
    <section class="datawin">
      <div class="dw-ok">OK</div>
      <dl class="dw-row"><dt>Symbol:</dt><dd>$XJO-ASX,M</dd></dl>
      <dl class="dw-row"><dt>Date:</dt><dd>07/01/05</dd></dl>
      <dl class="dw-row"><dt>Time:</dt><dd>00:00</dd></dl>
      <dl class="dw-row"><dt>Price:</dt><dd>3516.09236</dd></dl>
      <dl class="dw-row"><dt>Open</dt><dd>4272.7002</dd></dl>
      <dl class="dw-row"><dt>High</dt><dd>4398.7998</dd></dl>
      <dl class="dw-row"><dt>Low</dt><dd>4213.6001</dd></dl>
      <dl class="dw-row"><dt>Close</dt><dd>4388.7998</dd></dl>
      <dl class="dw-row r-maroon"><dt>MA(72,C)s</dt><dd>3341.68333</dd></dl>
      <dl class="dw-row r-orange"><dt>MA(12,C)s</dt><dd>4010.46662</dd></dl>
      <dl class="dw-row r-green"><dt>BB(20,2,C)Upr</dt><dd>4471.49768</dd></dl>
      <dl class="dw-row r-green"><dt>BB(20,2,C)Lwr</dt><dd>3068.83227</dd></dl>
      <dl class="dw-row r-green"><dt>BB(20,2,C)Bas</dt><dd>3770.16498</dd></dl>
      <dl class="dw-row"><dt>MA(200,C)</dt><dd></dd></dl>
      <dl class="dw-row r-gray"><dt>MA(40,C)e</dt><dd>3589.48556</dd></dl>
      <dl class="dw-row"><dt>MACDHist(12,26,9,C)</dt><dd>42.93</dd></dl>
      <dl class="dw-row r-blue"><dt>MACD(12,26,9,C)</dt><dd>270.36</dd></dl>
      <dl class="dw-row r-red"><dt>MACDSig(12,26,9,C)</dt><dd>227.42</dd></dl>
      <dl class="dw-row r-blue"><dt>%K(14,3,3)</dt><dd>92.36</dd></dl>
      <dl class="dw-row r-red"><dt>%D(14,3,3)</dt><dd>84.57</dd></dl>
    </section>
  </div>
  <div class="rail"></div>
</main>

<footer class="status">
  <span class="clock">Mon Feb 23 00:20:34 2015</span>
  <div class="spanels">
    <span class="sp sp-broker"><span>Broker:</span><span>N/A</span></span>
    <span class="sp sp-g sp-a"></span>
    <span class="sp sp-g sp-b"></span>
    <span class="sp sp-g sp-sym">Sym 1/1</span>
    <span class="sp sp-ok">OK</span>
    <span class="sp sp-ok sp-ok2">OK</span>
  </div>
</footer>
</div>
</body>
</html>
```

FILE: styles.css
```css
* { box-sizing: border-box; }
html, body { margin: 0; padding: 0; background: #f0f0f0; }
body { font-family: "Liberation Sans", Arial, sans-serif; font-size: 10px; color: #111; overflow: hidden; }
.app { width: 1024px; height: 795px; display: flex; flex-direction: column; overflow: hidden; background: #f0f0f0; }

/* title bar */
.titlebar { height: 16px; flex: none; display: flex; align-items: center; padding-left: 2px; position: relative; border-bottom: 1px solid #0a1a28;
  background: linear-gradient(100deg, #0f2437 0%, #14283c 40%, #112a40 62%, #1f3a52 68%, #10263a 75%, #16304a 100%); }
.ticon { width: 13px; height: 13px; flex: none; }
.ttext { margin-left: 2px; color: #e6eaee; font-size: 9.100px; white-space: nowrap; }
.winbtns { margin-left: auto; margin-right: 2px; display: flex; height: 15px; align-self: flex-start; border: 1px solid #6a7a88; border-top: 0; border-radius: 0 0 3px 3px; overflow: hidden; width: 75px; }
.wb { display: flex; align-items: center; justify-content: center; color: #fff; font-weight: bold; font-size: 11px; background: linear-gradient(#66788a, #2b3c4c); }
.wb-min { width: 20px; border-right: 1px solid #889; }
.wb-max { width: 20px; }
.wb-close { flex: 1; background: linear-gradient(#d98270, #a7301c); }
.wb-min i { width: 9px; height: 3px; background: #eee; margin-top: 6px; }
.wb-max i { width: 8px; height: 8px; border: 2px solid #dde; }

/* toolbars */
.band { background: #f0f0f0; flex: none; }
.band-top { height: 65px; padding-top: 3px; display: flex; flex-direction: column; align-items: flex-start; border-bottom: 1px solid #fbfbfb; }
.tbar { display: flex; align-items: center; flex: none; }
.tbar svg { width: 16px; height: 16px; display: block; flex: none; }
.tbar1 { height: 19px; width: 485px; padding-left: 5px; gap: 1px; border-right: 1px solid #ddd; }
.tbar2 { height: 21px; width: 486px; padding-left: 3px; border: 1px solid #e4e4e4; border-width: 0 1px 1px 0; background: #f1f1f1; }
.tbar3 { height: 21px; width: 382px; padding-left: 3px; margin-top: 1px; border: 1px solid #e4e4e4; border-width: 0 1px 1px 0; background: #f1f1f1; }
.tbar3 .grip { margin-right: 4px; }
.b { width: 16.5px; height: 17px; flex: none; display: flex; align-items: center; justify-content: center; background: #e6e6e6; border: 1px solid; border-color: #fff #777 #666 #fff; box-shadow: 1px 1px 0 #aaa; }
.b svg { width: 14px; height: 14px; }
.dis { background: #dedede; border-color: #fff #999 #888 #fff; }
.b-central { width: 53px; gap: 2px; font-weight: bold; font-size: 10px; color: #111; }
.b-trade { width: 51px; gap: 2px; font-weight: bold; font-size: 10px; color: #999; }
.b-trade svg { width: 20px; }
.gap { flex: none; display: block; }
.g2 { width: 2px; } .g3 { width: 3px; } .g4 { width: 4px; } .g5 { width: 5px; }
.grip { width: 2px; height: 15px; flex: none; display: block; border-left: 1px solid #aaa; border-right: 1px solid #fff; margin-right: 1px; }
.f { width: 17.6px; height: 18px; flex: none; display: flex; align-items: center; justify-content: center; }
.f svg { width: 15px; height: 15px; }
.f.on { background: #fafafa; box-shadow: inset 1px 1px 0 #999, inset -1px -1px 0 #fff; }
.sep { width: 2px; height: 15px; flex: none; display: block; margin: 0 2.250px; border-left: 1px solid #b5b5b5; border-right: 1px solid #fff; }
.sepw { margin: 0 3px; }
.svs { font: 6.500px "Liberation Sans", sans-serif; }
.svf { font: 6.500px "Liberation Sans", sans-serif; fill: #222; }
.svb { font: bold 10px "Liberation Sans", sans-serif; }
.svb-l { font-size: 13px; }
.svp { font: bold 11px "Liberation Sans", sans-serif; fill: #000; }

/* menu */
.menubar { height: 19px; flex: none; display: flex; align-items: center; padding-left: 3px; border-bottom: 1px solid #a8a8a8; background: #f1f1f1; }
.mlogo { width: 13px; height: 13px; margin-left: 3px; flex: none; }
.menu { list-style: none; margin: 0; padding: 0; display: flex; font-size: 9.500px; color: #222; }
.menu li { padding: 1px 5.300px; white-space: nowrap; font-family: "Liberation Sans", sans-serif; }
.menu .hot { background: #ececec; box-shadow: inset 1px 1px 0 #fff, inset -1px -1px 0 #aaa; }
.mdi { margin-left: auto; margin-right: 3px; display: flex; gap: 1px; }
.mb { width: 11px; height: 11px; display: block; background: #f4f4f4; border: 1px solid; border-color: #fff #777 #777 #fff; }
.mb svg { display: block; width: 10px; height: 10px; }

/* symbol row */
.symrow { height: 24px; display: flex; align-items: center; border-bottom: 1px solid #a8a8a8; }
.tsym { width: 213px; padding-left: 3px; border-right: 1px solid #ddd; height: 23px; }
.combo { width: 74px; flex: none; height: 17px; margin-left: 2px; background: #fff; border: 1px solid #888; display: flex; align-items: center; padding-left: 3px; font-size: 9.500px; white-space: nowrap; }
.combo span { flex: 1; }
.arrow { width: 12px; height: 15px; background: #ececec; border: 1px solid #888; position: relative; flex: none; }
.arrow::after { content: ""; display: block; width: 0; height: 0; margin: 5px 0 0 2px; border: 3px solid transparent; border-top: 4px solid #000; }
.link { margin-left: 2px; width: 17px; height: 19px; background: #d8d8d8; border-color: #666 #fff #fff #666; }
.sepsym { margin-left: 3px; margin-right: 5px; }
.q { font-size: 9.500px; white-space: nowrap; }
.q b { font-size: 9.800px; margin-left: 1px; }
.qch { margin-left: 7px; }
.neg { color: #f00; }
.tsym2 { margin-left: 24px; height: 23px; width: 133px; padding-left: 2px; border-right: 1px solid #ddd; gap: .5px; }
.tsym2 .grip { margin-right: 3px; }

/* link row */
.linkrow { height: 20px; display: flex; align-items: center; }
.tlink { height: 20px; padding-left: 3px; width: 492px; }
.tlink .grip { margin-right: 3px; }
.tlink .f { width: 17.300px; }
.fav { display: flex; align-items: center; margin-left: 4px; font-size: 9.700px; color: #333; white-space: nowrap; }
.fav svg { width: 13px; height: 13px; margin-right: 5px; }
.fname { margin-right: 4px; }
.caret { width: 0; height: 0; border: 3px solid transparent; border-top: 3px solid #000; margin-top: 3px; margin-right: 3px; }
.iv { display: flex; align-items: center; margin-left: 8.700px; font-size: 9.500px; color: #333; white-space: nowrap; gap: 5px; }
.fav + .iv { margin-left: 4px; }
.iv i { width: 11px; height: 11px; border: 1px solid #222; border-radius: 50%; display: flex; align-items: center; justify-content: center; font-size: 7.500px; font-style: normal; color: #000; }

/* workspace */
.work { flex: 1; display: flex; min-height: 0; }
.chart { width: 1010px; height: 634px; position: relative; flex: none; }
.plot { display: block; filter: blur(.25px); }
.rail { flex: 1; background: linear-gradient(90deg, #b9b9b9 0, #b9b9b9 10px, #f0f0f0 10px); }

/* svg chart */
.plot text { font-family: "Liberation Sans", Arial, sans-serif; }
.grid { stroke: #666; stroke-width: 1; stroke-dasharray: 1 4; fill: none; }
.hred { stroke: #f66; stroke-width: 1; fill: none; }
.tl { stroke-width: 1; fill: none; }
.tl-blue { stroke: #3a3af0; }
.tl-gray { stroke: #444; }
.tl-red { stroke: #f55; }
.w { fill: none; stroke-width: 1.700; }
.w-k { stroke: #000; }
.w-b { stroke: #0000ee; }
.w-r { stroke: #f00; }
.c { fill: none; }
.c-k { stroke: #000; stroke-width: 4.200; }
.c-bo { stroke: #000070; stroke-width: 4.600; }
.c-b { stroke: #0000f0; stroke-width: 3.200; }
.c-ro { stroke: #400; stroke-width: 4.400; }
.c-r { stroke: #e80000; stroke-width: 2.900; }
.bandm { fill: #f0f; }
.bandc { fill: #5ff; }
.ln { fill: none; stroke-linejoin: round; stroke-width: 1.400; }
.ma72 { stroke: #7d0c0c; stroke-width: 1.800; }
.ma200 { stroke: #000; stroke-width: 1.800; }
.ma40 { stroke: #808080; stroke-width: 1.500; }
.bb { stroke: #0d5f0d; }
.ma12 { stroke: #f7702a; }
.pane { stroke: #555; stroke-width: 1; }
.pane2 { stroke: #888; stroke-width: 2; }
.axisline { stroke: #555; stroke-width: 1; }
.edge { stroke: #999; stroke-width: 2; }
.wv text { font-size: 11px; text-anchor: middle; }
.wv-b { fill: #2222ee; }
.wv-r { fill: #ee2222; }
.dot text { font-size: 10.500px; font-weight: bold; text-anchor: middle; fill: #fff; stroke: #000; stroke-width: .4; }
.dot-b circle { fill: #0000dd; }
.dot-r circle { fill: #e01515; stroke: #700; stroke-width: .6; }
.wm { font-size: 7.500px; fill: #222; }
.hist { stroke: #000; stroke-width: 1.500; fill: none; }
.zero { stroke: #222; stroke-width: 1; fill: none; }
.ml { fill: none; stroke-width: 1; stroke-linejoin: round; }
.ml-b { stroke: #3c3cf0; }
.ml-r { stroke: #f03c3c; }
.sbar { stroke: #000; stroke-width: 3; fill: none; }
.sl { fill: none; stroke-width: 1.800; stroke-linejoin: round; }
.sl-b { stroke: #0000f0; }
.sl-r { stroke: #f00000; }
.ptitle { font-size: 11px; font-weight: bold; fill: #222; }
.ptitle-b { fill: #2626e0; font-size: 9.900px; }
.lgd { font-size: 10.500px; stroke-width: .25; stroke: currentColor; }
.lgd-ma72 { fill: #a01818; color: #a01818; }
.lgd-ma12 { fill: #f7702a; color: #f7702a; }
.lgd-bb { fill: #1c3c1c; color: #1c3c1c; }
.lgd-gr { fill: #556655; color: #556655; }
.lgd-ol { fill: #3c5c30; color: #3c5c30; }
.lgd-bl { fill: #1a1aee; color: #1a1aee; }
.ax text { font-size: 10px; font-weight: bold; fill: #222; }
.tag text { font-size: 10px; font-weight: bold; fill: #fff; }
.yr text { font-size: 10px; font-weight: bold; fill: #222; text-anchor: middle; }

/* data window */
.datawin { position: absolute; left: 9px; top: 23px; width: 144px; background: #000; border: 1px solid #aaa; border-width: 1px 2px 2px 1px; padding: 1px 0 0 1px; font-size: 8.500px; line-height: 9.600px; color: #e4e4e4; text-shadow: 0 0 .6px currentColor; }
.dw-ok { height: 9px; background: #00ff00; color: #063; text-align: center; line-height: 9px; margin-right: 1px; text-shadow: none; }
.dw-row { margin: 0; height: 9.600px; display: grid; grid-template-columns: 82px 1fr; column-gap: 4px; white-space: nowrap; }
.dw-row dt { text-align: right; display: flex; justify-content: flex-end; }
.dw-row dd { margin: 0; }
.r-maroon { background: #800000; }
.r-orange { background: #ff7020; color: #ffe8d8; }
.r-green { background: #0a5a0a; }
.r-gray { background: #666; }
.r-blue { background: #0000ff; color: #eef; }
.r-red { background: #ff0000; color: #fee; }

/* status bar */
.status { height: 17px; flex: none; display: flex; align-items: center; font-size: 8.900px; color: #222; background: #f0f0f0; }
.clock { margin-left: 1px; }
.spanels { margin-left: auto; display: flex; height: 17px; align-items: stretch; gap: 1px; font-size: 9.500px; }
.sp { display: flex; align-items: center; justify-content: center; }
.sp-broker { width: 66px; justify-content: space-between; padding: 0 7px 0 2px; border: 1px solid #bbb; background: #f0f0f0; margin-right: 1px; }
.sp-g { background: #c0c0c0; }
.sp-a { width: 28px; }
.sp-b { width: 25px; margin-right: 1px; }
.sp-sym { width: 77px; }
.sp-ok { width: 48px; background: #00ff00; color: #063; margin-left: 1px; }
.sp-ok2 { width: 51px; }
```
